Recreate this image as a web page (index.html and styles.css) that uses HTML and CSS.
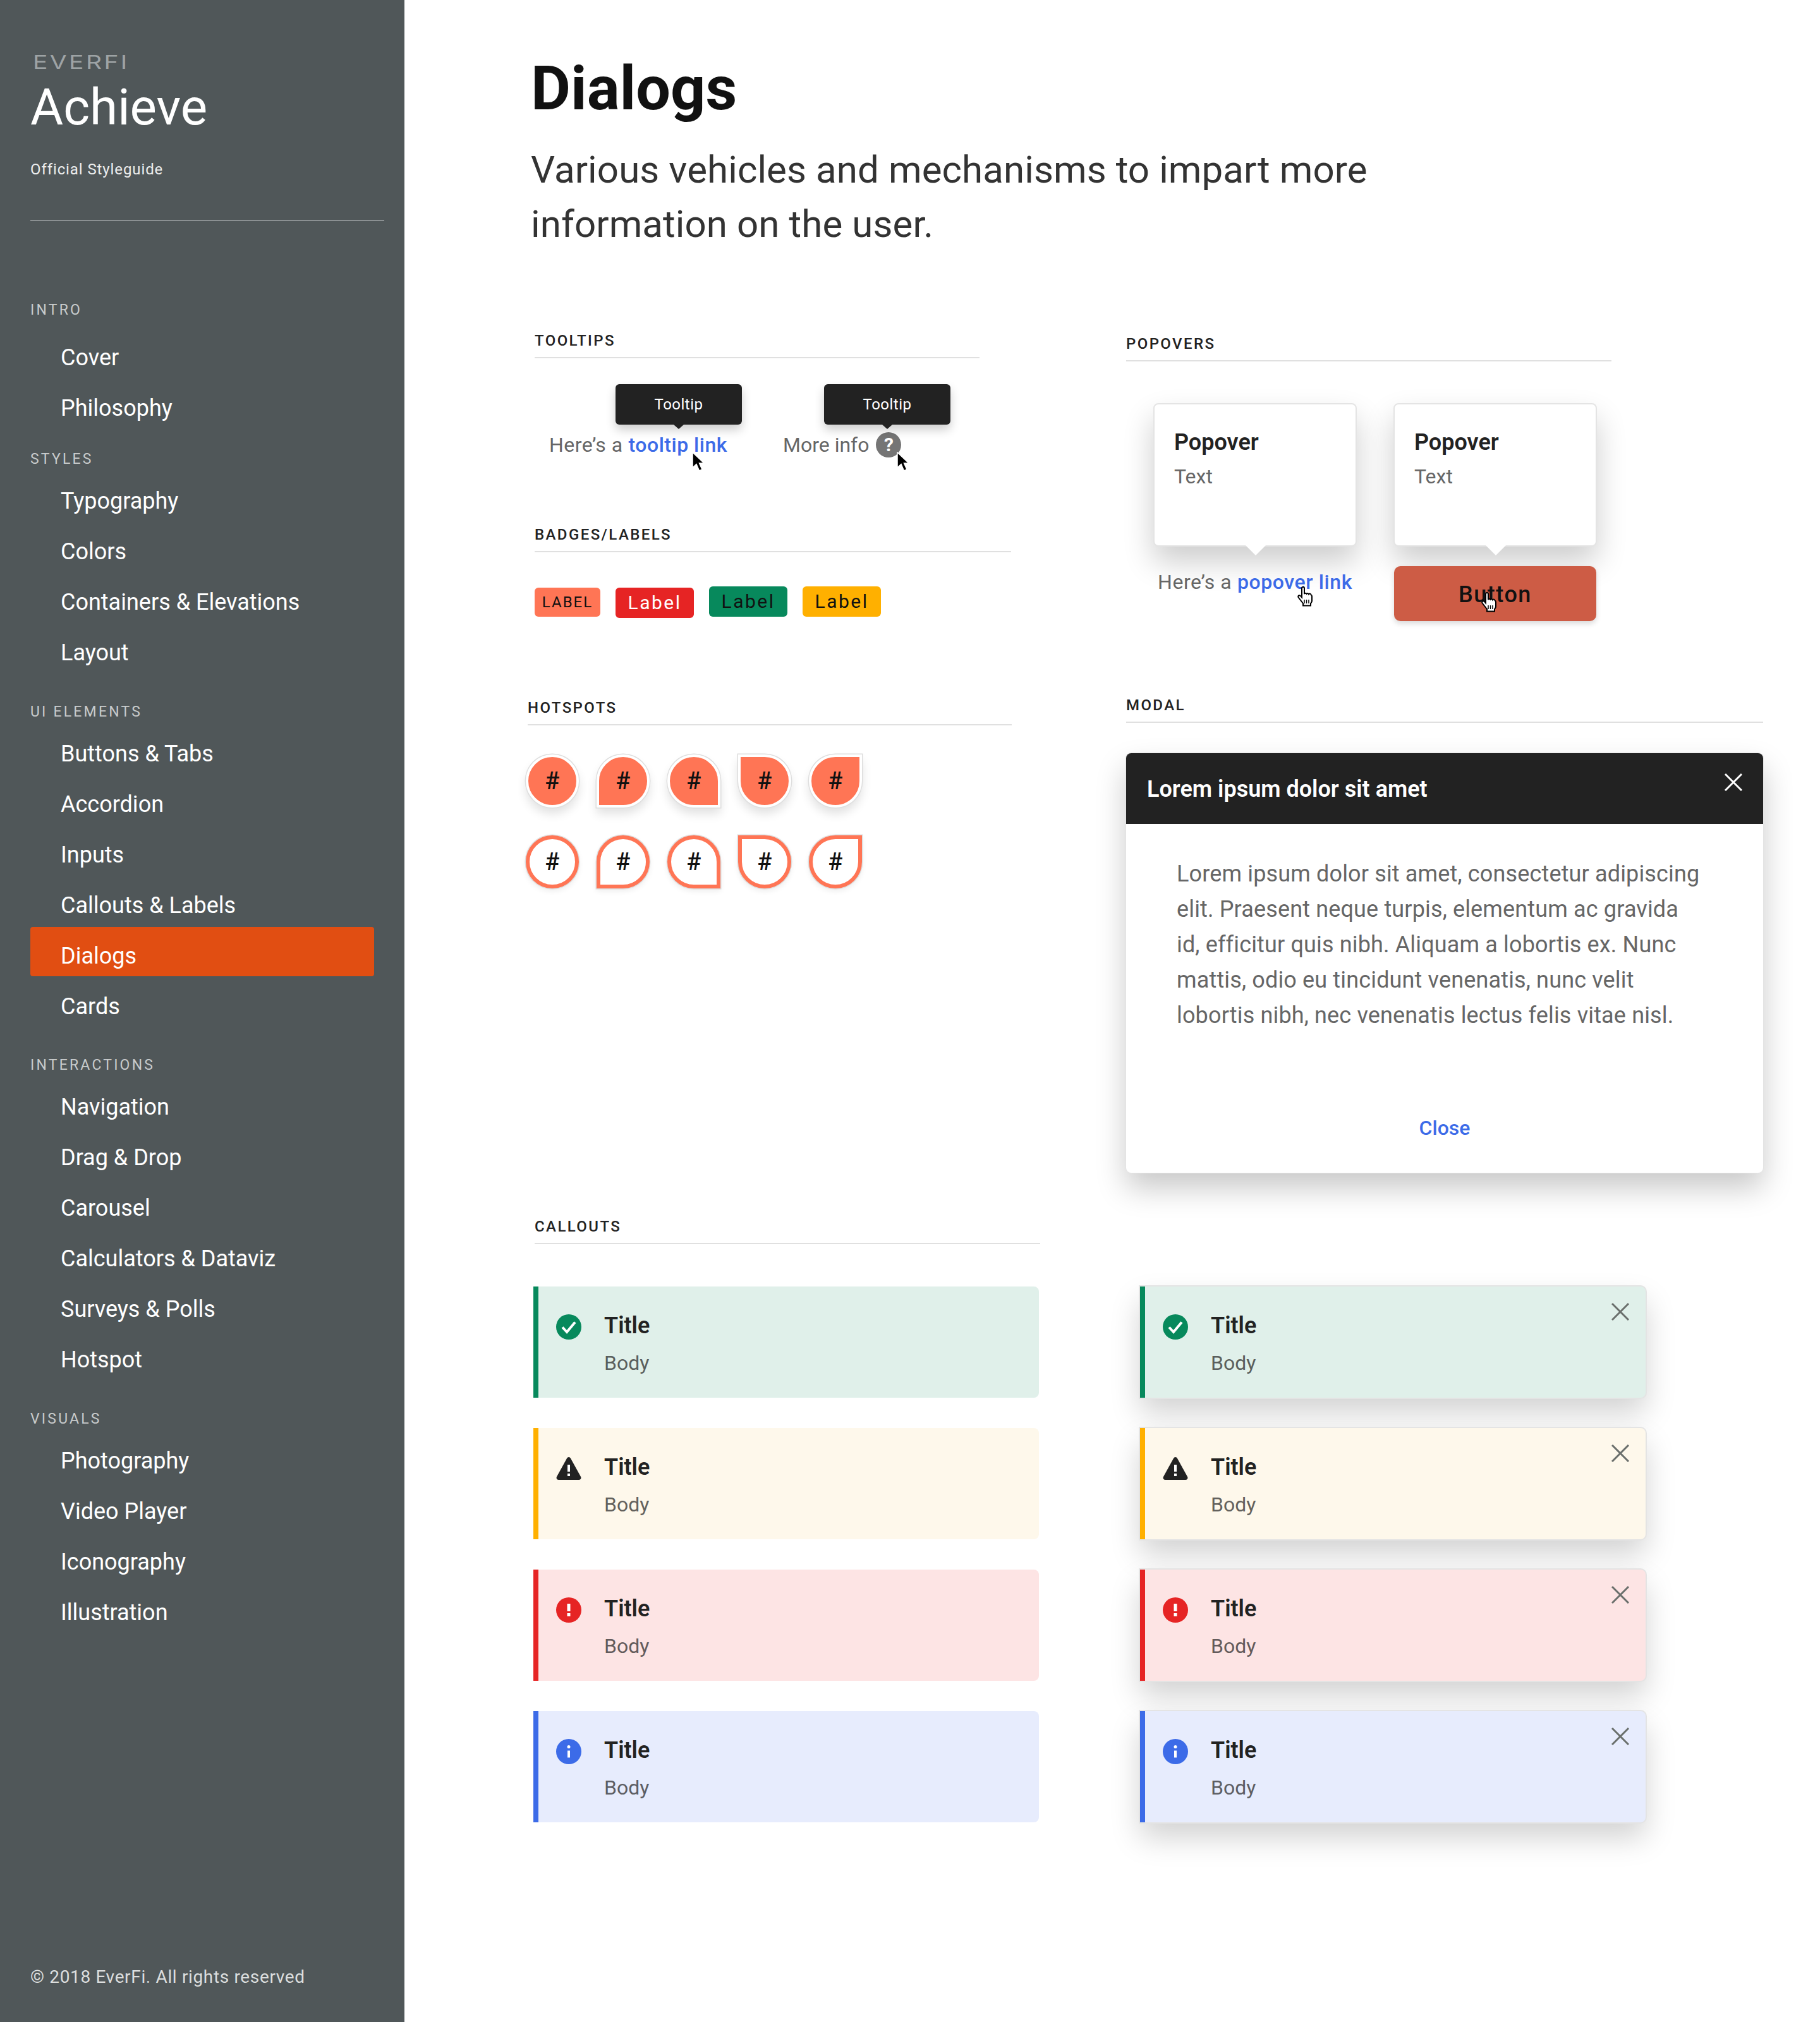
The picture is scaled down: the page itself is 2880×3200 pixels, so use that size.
FILE: index.html
```html
<!DOCTYPE html>
<html>
<head>
  <meta charset="utf-8">
  <title>Dialogs - Achieve Styleguide</title>
  <link rel="stylesheet" href="styles.css">
</head>
<body>
  <svg class="defs" width="0" height="0">
    <symbol id="i-check" viewBox="0 0 40 40">
      <circle cx="20" cy="20" r="20" fill="#07895c"/>
      <path d="M10 20.5l7 7.5L30 12.5" fill="none" stroke="#fff" stroke-width="4"/>
    </symbol>
    <symbol id="i-warn" viewBox="0 0 40 40">
      <path d="M20 2c1.400 0 2.300.8 3 2l16 29c1.200 2.300 0 5-3 5H4c-3 0-4.200-2.700-3-5L17 4c.7-1.200 1.600-2 3-2z" fill="#222"/>
      <rect x="18" y="14" width="4" height="11" fill="#fff"/>
      <rect x="18" y="28" width="4" height="4" fill="#fff"/>
    </symbol>
    <symbol id="i-error" viewBox="0 0 40 40">
      <circle cx="20" cy="20" r="20" fill="#e62424"/>
      <rect x="17.500" y="10" width="5" height="12" fill="#fff"/>
      <rect x="17.500" y="25" width="5" height="5" fill="#fff"/>
    </symbol>
    <symbol id="i-info" viewBox="0 0 40 40">
      <circle cx="20" cy="20" r="20" fill="#3c6be8"/>
      <circle cx="20" cy="12.500" r="2.500" fill="#fff"/>
      <rect x="18" y="18.500" width="4" height="11" fill="#fff"/>
    </symbol>
    <symbol id="i-x" viewBox="0 0 30 30">
      <path d="M2 2l26 26M28 2L2 28" fill="none" stroke="currentColor" stroke-width="3"/>
    </symbol>
    <symbol id="i-arrow" viewBox="0 0 24 32">
      <path d="M2 1v24l6-5.500 4.500 10.500 4.500-2-4.500-10H20z" fill="#000" stroke="#fff" stroke-width="1.500"/>
    </symbol>
    <symbol id="i-hand" viewBox="0 0 30 32">
      <path d="M9 3a2 2 0 0 1 4 0v9a2 2 0 0 1 3.600-.2 2 2 0 0 1 3.400.6 2 2 0 0 1 3.600 1c1 .3 1.400 1.200 1.400 2.400V23c0 2-1 3-2 4v3.500H11V27l-7-9c-1.500-2-.6-3.500.6-3.800 1-.2 2 .3 2.800 1.300L9 17.500z" fill="#fff" stroke="#000" stroke-width="2"/>
      <path d="M13 21v6M16.500 21v6M20 21v6" stroke="#000" stroke-width="1.500"/>
    </symbol>
  </svg>

  <aside class="sidebar">
    <div class="brand">
      <div class="brand-logo">EVERFI</div>
      <div class="brand-name">Achieve</div>
      <div class="brand-sub">Official Styleguide</div>
    </div>

    <nav class="nav">
      <div class="nav-group nav-first">
        <div class="nav-label">INTRO</div>
        <a class="nav-item">Cover</a>
        <a class="nav-item">Philosophy</a>
      </div>
      <div class="nav-group nav-tight">
        <div class="nav-label">STYLES</div>
        <a class="nav-item">Typography</a>
        <a class="nav-item">Colors</a>
        <a class="nav-item">Containers &amp; Elevations</a>
        <a class="nav-item">Layout</a>
      </div>
      <div class="nav-group">
        <div class="nav-label">UI ELEMENTS</div>
        <a class="nav-item">Buttons &amp; Tabs</a>
        <a class="nav-item">Accordion</a>
        <a class="nav-item">Inputs</a>
        <a class="nav-item">Callouts &amp; Labels</a>
        <a class="nav-item active">Dialogs</a>
        <a class="nav-item">Cards</a>
      </div>
      <div class="nav-group">
        <div class="nav-label">INTERACTIONS</div>
        <a class="nav-item">Navigation</a>
        <a class="nav-item">Drag &amp; Drop</a>
        <a class="nav-item">Carousel</a>
        <a class="nav-item">Calculators &amp; Dataviz</a>
        <a class="nav-item">Surveys &amp; Polls</a>
        <a class="nav-item">Hotspot</a>
      </div>
      <div class="nav-group">
        <div class="nav-label">VISUALS</div>
        <a class="nav-item">Photography</a>
        <a class="nav-item">Video Player</a>
        <a class="nav-item">Iconography</a>
        <a class="nav-item">Illustration</a>
      </div>
    </nav>

    <div class="copyright">© 2018 EverFi. All rights reserved</div>
  </aside>

  <main class="main">
    <h1 class="page-title">Dialogs</h1>
    <p class="page-sub">Various vehicles and mechanisms to impart more<br>information on the user.</p>

    <div class="board">
      <div class="col-left">
        <section class="tooltips">
          <h2 class="sec-head">TOOLTIPS</h2>
          <div class="tip-row">
            <div class="tip-demo demo-link">
              <div class="tip">Tooltip</div>
              Here’s a <a class="link">tooltip link</a>
              <svg class="cursor"><use href="#i-arrow"/></svg>
            </div>
            <div class="tip-demo demo-info">
              <div class="tip">Tooltip</div>
              More info <span class="qmark">?</span>
              <svg class="cursor"><use href="#i-arrow"/></svg>
            </div>
          </div>
        </section>

        <section class="badges">
          <h2 class="sec-head">BADGES/LABELS</h2>
          <div class="badge-row">
            <span class="badge badge-small">LABEL</span>
            <span class="badge badge-red">Label</span>
            <span class="badge badge-green">Label</span>
            <span class="badge badge-yellow">Label</span>
          </div>
        </section>

        <section class="hotspots">
          <h2 class="sec-head">HOTSPOTS</h2>
          <div class="spot-row">
            <div class="spot">#</div>
            <div class="spot corner-bl">#</div>
            <div class="spot corner-br">#</div>
            <div class="spot corner-tl">#</div>
            <div class="spot corner-tr">#</div>
          </div>
          <div class="spot-row">
            <div class="spot line">#</div>
            <div class="spot line corner-bl">#</div>
            <div class="spot line corner-br">#</div>
            <div class="spot line corner-tl">#</div>
            <div class="spot line corner-tr">#</div>
          </div>
        </section>
      </div>

      <div class="col-right">
        <section class="popovers">
          <h2 class="sec-head">POPOVERS</h2>
          <div class="pop-row">
            <div class="pop-col">
              <div class="pop">
                <div class="pop-title">Popover</div>
                <div class="pop-text">Text</div>
              </div>
              <div class="pop-link">Here’s a <a class="link">popover link</a></div>
              <svg class="hand hand-link"><use href="#i-hand"/></svg>
            </div>
            <div class="pop-col">
              <div class="pop">
                <div class="pop-title">Popover</div>
                <div class="pop-text">Text</div>
              </div>
              <div class="btn">Button</div>
              <svg class="hand hand-btn"><use href="#i-hand"/></svg>
            </div>
          </div>
        </section>

        <section class="modal-sec">
          <h2 class="sec-head">MODAL</h2>
          <div class="modal">
            <div class="modal-head">
              <span>Lorem ipsum dolor sit amet</span>
              <svg class="modal-x"><use href="#i-x"/></svg>
            </div>
            <p class="modal-body">Lorem ipsum dolor sit amet, consectetur adipiscing<br>elit. Praesent neque turpis, elementum ac gravida<br>id, efficitur quis nibh. Aliquam a lobortis ex. Nunc<br>mattis, odio eu tincidunt venenatis, nunc velit<br>lobortis nibh, nec venenatis lectus felis vitae nisl.</p>
            <a class="modal-close">Close</a>
          </div>
        </section>
      </div>
    </div>

    <section class="callouts">
      <h2 class="sec-head">CALLOUTS</h2>
      <div class="callout-grid">
        <div class="callout success">
          <svg class="callout-icon"><use href="#i-check"/></svg>
          <div><div class="callout-title">Title</div><div class="callout-body">Body</div></div>
        </div>
        <div class="callout success raised">
          <svg class="callout-icon"><use href="#i-check"/></svg>
          <div><div class="callout-title">Title</div><div class="callout-body">Body</div></div>
          <svg class="callout-x"><use href="#i-x"/></svg>
        </div>
        <div class="callout warning">
          <svg class="callout-icon"><use href="#i-warn"/></svg>
          <div><div class="callout-title">Title</div><div class="callout-body">Body</div></div>
        </div>
        <div class="callout warning raised">
          <svg class="callout-icon"><use href="#i-warn"/></svg>
          <div><div class="callout-title">Title</div><div class="callout-body">Body</div></div>
          <svg class="callout-x"><use href="#i-x"/></svg>
        </div>
        <div class="callout danger">
          <svg class="callout-icon"><use href="#i-error"/></svg>
          <div><div class="callout-title">Title</div><div class="callout-body">Body</div></div>
        </div>
        <div class="callout danger raised">
          <svg class="callout-icon"><use href="#i-error"/></svg>
          <div><div class="callout-title">Title</div><div class="callout-body">Body</div></div>
          <svg class="callout-x"><use href="#i-x"/></svg>
        </div>
        <div class="callout info">
          <svg class="callout-icon"><use href="#i-info"/></svg>
          <div><div class="callout-title">Title</div><div class="callout-body">Body</div></div>
        </div>
        <div class="callout info raised">
          <svg class="callout-icon"><use href="#i-info"/></svg>
          <div><div class="callout-title">Title</div><div class="callout-body">Body</div></div>
          <svg class="callout-x"><use href="#i-x"/></svg>
        </div>
      </div>
    </section>
  </main>
</body>
</html>
```

FILE: styles.css
```css
* {
  box-sizing: border-box;
}

body {
  margin: 0;
  display: flex;
  min-height: 3200px;
  background: #fff;
  color: #222;
  font-family: Roboto, sans-serif;
}

.defs {
  position: absolute;
}

/* sidebar */
.sidebar {
  width: 640px;
  flex: none;
  display: flex;
  flex-direction: column;
  background: #505759;
  color: #fff;
  padding: 80px 32px 53px 48px;
}

.brand {
  height: 270px;
  border-bottom: 2px solid #8b9092;
}

.brand-logo {
  font-family: Inter, sans-serif;
  font-size: 30px;
  line-height: 36px;
  letter-spacing: 2.600px;
  font-weight: 400;
  color: #9ea3a5;
  margin-left: 4px;
  transform: scaleX(1.3);
  transform-origin: left;
}

.brand-name {
  font-size: 80px;
  line-height: 96px;
  margin-top: 6px;
}

.brand-sub {
  font-size: 24px;
  line-height: 32px;
  letter-spacing: .9px;
  margin-top: 34px;
  color: #eceded;
}

.nav {
  margin-top: 127px;
}

.nav-group {
  margin-top: 47.500px;
}

.nav-first {
  margin-top: 0;
}

.nav-tight {
  margin-top: 35px;
}

.nav-label {
  font-size: 23px;
  line-height: 28px;
  letter-spacing: 3.200px;
  color: #c8cbcc;
  margin-bottom: 6px;
}

.nav-first .nav-label {
  margin-bottom: 15px;
}

.nav-item {
  display: block;
  font-size: 36px;
  line-height: 56px;
  height: 78px;
  margin-bottom: 2px;
  padding: 18px 0 4px 48px;
  width: 544px;
  border-radius: 4px;
}

.nav-item.active {
  background: #e14e12;
}

.copyright {
  margin-top: auto;
  font-size: 28px;
  letter-spacing: .65px;
  line-height: 36px;
  color: #dcdede;
}

/* main */
.main {
  flex: 1;
  padding: 80px 0 0 200px;
}

.page-title {
  margin: 0;
  font-size: 97px;
  line-height: 120px;
  font-weight: 700;
  color: #111;
}

.page-sub {
  margin: 26px 0 0;
  font-size: 60px;
  letter-spacing: .1px;
  line-height: 86px;
  color: #333;
}

.board {
  display: grid;
  grid-template-columns: 942px 1008px;
  margin-top: 125px;
}

.sec-head {
  margin: 0;
  font-size: 24px;
  line-height: 32px;
  font-weight: 500;
  letter-spacing: 2.400px;
  padding-bottom: 10px;
  border-bottom: 2px solid #e0e0e0;
}

/* tooltips */
.tooltips {
  margin-left: 6px;
  width: 704px;
}

.tip-row {
  display: flex;
  margin-top: 115px;
  padding-left: 23px;
  font-size: 32px;
  line-height: 44px;
  color: #666;
}

.tip-demo {
  position: relative;
  display: flex;
  align-items: center;
  gap: 9px;
  white-space: nowrap;
}

.demo-link {
  letter-spacing: .5px;
}

.demo-info {
  position: absolute;
  margin-left: 370px;
  gap: 11px;
}

.link {
  color: #3c6be8;
  font-weight: 500;
}

.tip {
  position: absolute;
  top: -74px;
  width: 200px;
  height: 64px;
  background: #222;
  color: #fff;
  border-radius: 6px;
  font-size: 24px;
  letter-spacing: .5px;
  line-height: 64px;
  text-align: center;
  box-shadow: 0 8px 16px rgba(0, 0, 0, .2);
}

.tip::after {
  content: "";
  position: absolute;
  left: 92px;
  top: 64px;
  border-left: 8px solid transparent;
  border-right: 8px solid transparent;
  border-top: 7px solid #222;
}

.demo-link .tip {
  left: 105px;
}

.demo-info .tip {
  left: 65px;
}

.qmark {
  width: 40px;
  height: 40px;
  border-radius: 50%;
  background: #757575;
  color: #fff;
  font-weight: 700;
  font-size: 30px;
  line-height: 40px;
  text-align: center;
}

.cursor {
  position: absolute;
  width: 24px;
  height: 32px;
}

.demo-link .cursor {
  left: 225px;
  top: 33px;
}

.demo-info .cursor {
  left: 179px;
  top: 33px;
}

/* badges */
.badges {
  margin-left: 6px;
  margin-top: 104px;
  width: 754px;
}

.badge-row {
  display: flex;
  align-items: flex-start;
  gap: 24px;
  margin-top: 54px;
}

.badge {
  display: block;
  width: 124px;
  height: 48px;
  border-radius: 6px;
  font-size: 30px;
  line-height: 48px;
  letter-spacing: 2.500px;
  text-align: center;
  color: #111;
}

.badge-small {
  width: 104px;
  height: 46px;
  margin-top: 2px;
  background: #ff7555;
  font-size: 24px;
  letter-spacing: 2px;
  line-height: 46px;
}

.badge-red {
  margin-top: 2px;
  background: #e62424;
  color: #fff;
}

.badge-green {
  background: #07895c;
}

.badge-yellow {
  background: #ffb000;
}

/* hotspots */
.hotspots {
  margin-left: -5px;
  margin-top: 126px;
  width: 766px;
}

.spot-row {
  display: flex;
  gap: 28px;
  margin-top: 46px;
  margin-left: -3px;
}

.spot-row + .spot-row {
  margin-top: 44px;
}

.spot {
  width: 84px;
  height: 84px;
  border: 4px solid #fff;
  border-radius: 50%;
  background: #ff7555;
  color: #111;
  font-size: 38px;
  font-weight: 500;
  line-height: 76px;
  text-align: center;
  box-shadow: 0 0 0 1.500px #dedede, 0 10px 16px rgba(0, 0, 0, .12);
}

.spot.line {
  border: 6px solid #ff7555;
  background: #fff;
  line-height: 72px;
  box-shadow: 0 0 0 1.500px #dedede, 0 4px 10px rgba(0, 0, 0, .08);
}

.corner-bl {
  border-bottom-left-radius: 0;
}

.corner-br {
  border-bottom-right-radius: 0;
}

.corner-tl {
  border-top-left-radius: 0;
}

.corner-tr {
  border-top-right-radius: 0;
}

/* popovers */
.popovers {
  margin-top: 5px;
  width: 768px;
}

.pop-row {
  display: flex;
  gap: 58px;
  margin-top: 66px;
  margin-left: 43px;
}

.pop-col {
  position: relative;
  width: 322px;
}

.pop {
  position: relative;
  height: 227px;
  padding: 36px 31px;
  background: #fff;
  border: 2px solid #e4e4e4;
  border-radius: 8px;
  box-shadow: 0 24px 48px rgba(0, 0, 0, .2);
}

.pop::after {
  content: "";
  position: absolute;
  left: 144px;
  top: 223px;
  border-left: 16px solid transparent;
  border-right: 16px solid transparent;
  border-top: 16px solid #fff;
}

.pop-title {
  font-size: 36px;
  line-height: 48px;
  font-weight: 600;
}

.pop-text {
  font-size: 32px;
  line-height: 44px;
  margin-top: 8px;
  color: #666;
}

.pop-link {
  position: relative;
  margin-top: 34px;
  font-size: 32px;
  letter-spacing: .6px;
  line-height: 44px;
  color: #666;
  text-align: center;
  white-space: nowrap;
}

.btn {
  position: relative;
  width: 320px;
  height: 87px;
  margin: 31px 0 0 1px;
  padding-top: 2px;
  border-radius: 10px;
  background: #cd5c45;
  color: #111;
  font-size: 36px;
  font-weight: 500;
  letter-spacing: 1.500px;
  line-height: 87px;
  text-align: center;
  box-shadow: 0 4px 8px rgba(0, 0, 0, .15);
}

.hand {
  position: absolute;
  width: 30px;
  height: 32px;
}

.hand-link {
  left: 226px;
  top: 290px;
}

.hand-btn {
  left: 137px;
  top: 299px;
}

/* modal */
.modal-sec {
  margin-top: 117px;
}

.modal {
  position: relative;
  height: 664px;
  margin-top: 48px;
  border-radius: 8px;
  background: #fff;
  box-shadow: 0 0 0 1px #e4e4e4, 0 24px 48px rgba(0, 0, 0, .22);
}

.modal-head {
  display: flex;
  align-items: center;
  justify-content: space-between;
  height: 112px;
  padding: 2px 32px 0 33px;
  background: #222;
  color: #fff;
  border-radius: 8px 8px 0 0;
  font-size: 36px;
  font-weight: 600;
}

.modal-x {
  width: 30px;
  height: 30px;
  margin-bottom: 22px;
}

.modal-body {
  margin: 0;
  padding: 51px 0 0 80px;
  font-size: 36px;
  letter-spacing: .15px;
  line-height: 56px;
  color: #666;
  white-space: nowrap;
}

.modal-close {
  display: block;
  margin-top: 128px;
  font-size: 32px;
  font-weight: 500;
  line-height: 44px;
  text-align: center;
  color: #3c6be8;
}

/* callouts */
.callouts {
  margin-top: 69px;
  margin-left: 6px;
}

.callouts .sec-head {
  width: 800px;
}

.callout-grid {
  display: grid;
  grid-template-columns: 800px 800px;
  grid-auto-rows: 176px;
  column-gap: 160px;
  row-gap: 48px;
  margin-top: 67px;
  margin-left: -2px;
}

.callout {
  position: relative;
  display: flex;
  gap: 36px;
  padding: 38px 0 0 28px;
  border-left: 8px solid;
  border-radius: 0 8px 8px 0;
}

.callout-icon {
  width: 40px;
  height: 40px;
  margin-top: 6px;
  flex: none;
}

.callout-title {
  font-size: 36px;
  line-height: 48px;
  font-weight: 600;
}

.callout-body {
  margin-top: 13px;
  font-size: 32px;
  line-height: 44px;
  color: #222;
  opacity: .7;
}

.callout-x {
  position: absolute;
  top: 25px;
  right: 25px;
  width: 30px;
  height: 30px;
  color: #6a6f6c;
}

.raised {
  box-shadow: 0 0 0 2px #e4e4e4, 0 24px 48px rgba(0, 0, 0, .18);
}

.success {
  background: #e0f0ea;
  border-color: #07895c;
}

.warning {
  background: #fef8eb;
  border-color: #ffb000;
}

.danger {
  background: #fde4e4;
  border-color: #e62424;
}

.info {
  background: #e7ecfd;
  border-color: #3c6be8;
}
```
